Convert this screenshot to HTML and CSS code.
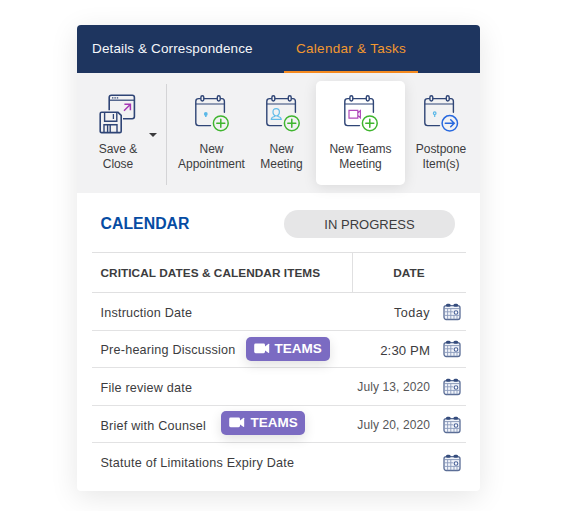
FILE: index.html
```html
<!DOCTYPE html>
<html lang="en">
<head>
<meta charset="utf-8">
<title>Calendar &amp; Tasks</title>
<link rel="stylesheet" href="styles.css">
</head>
<body>
<svg class="defs" aria-hidden="true">
  <symbol id="calendar" viewBox="0 0 36 38">
    <g fill="none" stroke="#2f4576" stroke-width="1.4" stroke-linecap="round">
      <path d="M6.300 4.600H4.600Q1.800 4.600 1.800 7.400V28.800Q1.800 31.600 4.600 31.600H16.500"/>
      <path d="M10.300 4.600H22.700M26.700 4.600H28Q30.400 4.600 30.400 7.400V18.200"/>
      <path d="M2 10H30.200" stroke-width="1.1"/>
      <rect x="6.900" y="1.800" width="2.900" height="5.200" rx="1.400"/>
      <rect x="23.300" y="1.800" width="2.900" height="5.200" rx="1.400"/>
    </g>
  </symbol>
  <symbol id="plus" viewBox="0 0 36 38">
    <g fill="none" stroke="#3fb52e" stroke-width="1.5" stroke-linecap="round">
      <circle cx="26.800" cy="29.300" r="7.400"/>
      <path d="M22.800 29.300h8M26.800 25.300v8"/>
    </g>
  </symbol>
  <symbol id="grid-calendar" viewBox="0 0 18 18">
    <rect x="1" y="2.600" width="16" height="13.900" rx="2.200" fill="#f1f4fa" stroke="#596c95" stroke-width="1.300"/>
    <path d="M1.400 5.600h15.200" stroke="#7485a8" stroke-width=".8"/>
    <path d="M1.400 8.800h9M1.400 12.400h15.200M4.600 5.600v10.600M7.800 5.600v10.600M11 12v4.200M14 12.400v3.800" stroke="#8b9bbc" stroke-width=".9"/>
    <circle cx="13" cy="9.500" r="1.800" fill="#fff" stroke="#4a6298" stroke-width="1.100"/>
    <path d="M4.400 2.300h1.800M11.900 2.300h1.800" stroke="#354c7d" stroke-width="3" stroke-linecap="round"/>
  </symbol>
  <symbol id="camera" viewBox="0 0 16 11">
    <rect x=".2" y=".6" width="10.800" height="9.600" rx="1.400" fill="#fff"/>
    <path d="M10 4.200L14.600.8Q15.200.5 15.200 1.200V9.600Q15.200 10.300 14.600 10L10 6.800Z" fill="#fff"/>
  </symbol>
</svg>

<main class="card">
  <nav class="tabs">
    <a class="tab tab-details">Details &amp; Correspondence</a>
    <a class="tab tab-active">Calendar &amp; Tasks</a>
  </nav>

  <div class="toolbar">
    <div class="tool tool-save">
      <div class="tool-main">
        <svg class="save-icon" viewBox="0 0 38 40">
          <g fill="none" stroke="#2f4576" stroke-width="1.600">
            <rect x="10.200" y="1.200" width="25.200" height="23.600" rx="2.200"/>
            <path d="M10.400 6.200h24.800" stroke-width="1.200"/>
            <path d="M13 3.800h7" stroke-width="1.200" stroke-dasharray="1.400 1"/>
            <path d="M.6 18.300h17.600l3.800 3V37.600q0 1.200-1.200 1.200H2.200Q1 38.800 1 37.600V18.300Z" fill="#f2f2f3" stroke="#f2f2f3" stroke-width="4"/>
            <path d="M2.600 18.300H19l3.200 3V37.200q0 1.400-1.400 1.400H2.600q-1.400 0-1.400-1.400V19.700q0-1.400 1.400-1.400Z"/>
            <path d="M5.600 18.600v8.600h12.200v-8.600M5 38.400v-7.600h13v7.600M8.600 31v7.200M11.200 31v7.200" stroke-width="1.400"/>
            <path d="M14.400 20v5" stroke-width="1.300"/>
          </g>
          <path d="M25 16.800l6-6M25.400 10.300h6v6" fill="none" stroke="#a637b4" stroke-width="1.500"/>
        </svg>
        <span class="label">Save &amp;<br>Close</span>
      </div>
      <span class="caret"></span>
    </div>

    <div class="tool">
      <svg class="tool-icon" viewBox="0 0 36 38">
        <use href="#calendar"/><use href="#plus"/>
        <circle cx="11.800" cy="19.900" r="1.900" fill="#5bb8e8"/><path d="M11.800 20v3" stroke="#5bb8e8" stroke-width="1.500"/>
      </svg>
      <span class="label">New<br>Appointment</span>
    </div>

    <div class="tool">
      <svg class="tool-icon icon-meeting" viewBox="0 0 36 38">
        <use href="#calendar"/><use href="#plus"/>
        <g fill="none" stroke="#63bde9" stroke-width="1.200">
          <path d="M11.200 14.600q3.200 0 3.200 3.300T11.200 22Q8 21.200 8 17.900T11.200 14.600Z"/>
          <path d="M9.600 21.200v1.300Q6.300 23.100 6.300 25.300H16.200Q16.200 23.100 12.900 22.500V21.200"/>
        </g>
      </svg>
      <span class="label">New<br>Meeting</span>
    </div>

    <div class="tool tool-active">
      <svg class="tool-icon" viewBox="0 0 36 38">
        <use href="#calendar"/><use href="#plus"/>
        <path d="M6 16.300h8.800v7.800H6ZM14.800 19l2.600-2.400v7.200l-2.600-2.400" fill="none" stroke="#b04abb" stroke-width="1.200"/>
      </svg>
      <span class="label">New Teams<br>Meeting</span>
    </div>

    <div class="tool">
      <svg class="tool-icon" viewBox="0 0 36 38">
        <use href="#calendar"/>
        <circle cx="11.700" cy="19.200" r="1.300" fill="none" stroke="#5bb8e8" stroke-width="1.200"/><path d="M11.700 20.600v2.400" stroke="#5bb8e8" stroke-width="1.200"/>
        <g fill="none" stroke="#2869df" stroke-width="1.500" stroke-linecap="round">
          <circle cx="26.800" cy="29.300" r="7.700"/>
          <path d="M22.300 29.300h8.800M27.700 25.800l3.500 3.500-3.500 3.500"/>
        </g>
      </svg>
      <span class="label">Postpone<br>Item(s)</span>
    </div>
  </div>

  <section class="content">
    <header class="heading">
      <h1>CALENDAR</h1>
      <span class="status">IN PROGRESS</span>
    </header>
    <div class="columns">
      <span class="col-items">CRITICAL DATES &amp; CALENDAR ITEMS</span>
      <span class="col-date">DATE</span>
    </div>
    <div class="row">
      <span class="name">Instruction Date</span>
      <span class="when today">Today</span>
      <svg class="date-icon"><use href="#grid-calendar"/></svg>
    </div>
    <div class="row">
      <span class="name">Pre-hearing Discussion</span>
      <span class="badge"><svg class="camera"><use href="#camera"/></svg>TEAMS</span>
      <span class="when time">2:30 PM</span>
      <svg class="date-icon"><use href="#grid-calendar"/></svg>
    </div>
    <div class="row">
      <span class="name">File review date</span>
      <span class="when day">July 13, 2020</span>
      <svg class="date-icon"><use href="#grid-calendar"/></svg>
    </div>
    <div class="row">
      <span class="name">Brief with Counsel</span>
      <span class="badge badge-brief"><svg class="camera"><use href="#camera"/></svg>TEAMS</span>
      <span class="when day">July 20, 2020</span>
      <svg class="date-icon"><use href="#grid-calendar"/></svg>
    </div>
    <div class="row">
      <span class="name">Statute of Limitations Expiry Date</span>
      <span class="when"></span>
      <svg class="date-icon"><use href="#grid-calendar"/></svg>
    </div>
  </section>
</main>
</body>
</html>
```
FILE: styles.css
```css
* { box-sizing: border-box; }

body {
  margin: 0;
  padding: 25px 0 0 77px;
  height: 511px;
  overflow: hidden;
  background: #fff;
  color: #3c3c3e;
  font-family: "Liberation Sans", Arial, sans-serif;
}

.defs { position: absolute; width: 0; height: 0; }

.card {
  width: 403px;
  height: 466px;
  border-radius: 4px;
  background: #fff;
  box-shadow: 0 6px 28px rgba(0, 0, 0, .1);
}

.tabs {
  display: flex;
  height: 48px;
  padding-left: 15px;
  border-radius: 4px 4px 0 0;
  background: #1e355f;
}

.tab {
  height: 48px;
  color: #f5f7fa;
  font-size: 13.5px;
  line-height: 47px;
  letter-spacing: .13px;
  white-space: nowrap;
}

.tab-details { width: 192px; }

.tab-active {
  width: 134px;
  padding-left: 12px;
  border-bottom: 2px solid #f58a1f;
  color: #f3982f;
  letter-spacing: .28px;
}

.toolbar {
  display: grid;
  grid-template-columns: 90px 89px 51px 89px 72px;
  height: 120px;
  padding-top: 8px;
  background: #f2f2f3;
}

.tool {
  display: flex;
  flex-direction: column;
  align-items: center;
  height: 104px;
  padding-top: 13px;
}

.tool:nth-child(4) { margin-left: 9px; margin-right: -9px; }
.tool:nth-child(5) { margin-left: 9px; margin-right: -9px; }

.tool-save {
  flex-direction: row;
  align-items: flex-start;
  height: 101px;
  margin-top: 3px;
  padding-top: 10px;
  border-right: 1px solid #d4d4d6;
}

.tool-main {
  display: flex;
  flex-direction: column;
  align-items: center;
  width: 82px;
  flex: none;
}

.save-icon { width: 38px; height: 40px; margin-bottom: 8px; }

.caret {
  flex: none;
  margin: 39px 0 0 -10px;
  border: 4px solid transparent;
  border-top-color: #3b3b3d;
  border-bottom: 0;
}

.tool-icon { width: 36px; height: 38px; margin-bottom: 10px; flex: none; }
.icon-meeting { margin-left: 2px; }

.tool-active {
  border-radius: 5px;
  background: #fff;
  box-shadow: 0 2px 14px rgba(0, 0, 0, .1);
}

.label {
  font-size: 12px;
  line-height: 15px;
  letter-spacing: -.05px;
  text-align: center;
  white-space: nowrap;
}

.content { padding: 0 14px 0 15px; }

.heading {
  display: flex;
  align-items: center;
  justify-content: space-between;
  height: 59px;
  padding: 2px 11px 0 8.5px;
}

h1 {
  margin: 0;
  color: #064ca3;
  font-size: 15.8px;
  letter-spacing: .05px;
}

.status {
  width: 171px;
  height: 28px;
  border-radius: 14px;
  background: #e6e6e7;
  font-size: 13px;
  line-height: 29px;
  text-align: center;
}

.columns {
  display: flex;
  height: 41px;
  border-top: 1px solid #e0e0e1;
  border-bottom: 1px solid #e0e0e1;
  font-size: 11.8px;
  font-weight: bold;
  line-height: 40px;
  letter-spacing: .06px;
}

.col-items { width: 261px; padding-left: 8.5px; border-right: 1px solid #e0e0e1; }
.col-date { flex: 1; padding-right: 1px; text-align: center; }

.row {
  display: flex;
  align-items: center;
  height: 37.6px;
  padding: 3px 5px 0 8.5px;
  border-bottom: 1px solid #e2e2e3;
  font-size: 12.6px;
  letter-spacing: .22px;
  white-space: nowrap;
}

.row:last-child { padding-top: 1px; border-bottom: 0; }

.badge {
  display: flex;
  align-items: center;
  width: 84px;
  height: 24px;
  margin: -3px 0 0 10px;
  padding-left: 8px;
  border-radius: 5px;
  background: #7b6bc2;
  box-shadow: 0 4px 12px rgba(0, 0, 0, .12);
  color: #fff;
  font-size: 13.5px;
  font-weight: bold;
  letter-spacing: 0;
}

.badge-brief { margin: -6px 0 0 15.500px; }
.camera { width: 16px; height: 11px; margin-right: 5px; }

.when { margin-left: auto; margin-right: 13px; }
.today { letter-spacing: .5px; }
.time { font-size: 13.2px; letter-spacing: .1px; }
.day { margin-top: -2px; font-size: 12px; letter-spacing: .1px; color: #555557; }

.date-icon { width: 18px; height: 18px; flex: none; margin-top: -2px; }
.row:last-child .date-icon { margin-top: 0; }
```
